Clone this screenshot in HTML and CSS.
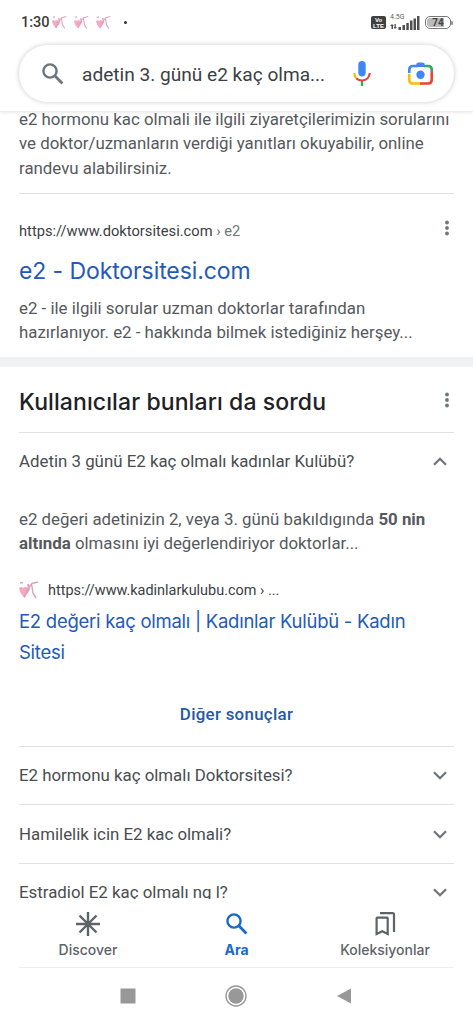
FILE: index.html
```html
<!DOCTYPE html>
<html lang="tr">
<head>
<meta charset="utf-8">
<meta name="viewport" content="width=device-width">
<title>adetin 3. günü e2 kaç olmalı</title>
<link rel="stylesheet" href="styles.css">
</head>
<body>
<svg class="defs" width="0" height="0">
  <symbol id="figure" viewBox="0 0 20 18">
    <path d="M0 7 Q2 5 4 7 Q7 4 9 8 Q11 11 7 13 L6 17 Q1 13 0 7Z" fill="#f6a9bf"/>
    <path d="M9 3 L10 8 L5 16" fill="none" stroke="#f09ab4" stroke-width="1.8"/>
    <path d="M1 2 L4 1.500 M7 10 L13 2.500 L19 1 M12.500 3 L14 12 L17 17" fill="none" stroke="#d9a6bf" stroke-width="1.5"/>
  </symbol>
  <symbol id="dots" viewBox="0 0 4 16"><circle cx="2" cy="2.5" r="1.9"/><circle cx="2" cy="8" r="1.9"/><circle cx="2" cy="13.5" r="1.9"/></symbol>
  <symbol id="down" viewBox="0 0 14 9"><path d="M1 1.2 7 7.2 13 1.2" fill="none" stroke="#70757a" stroke-width="2.3"/></symbol>
  <symbol id="search" viewBox="0 0 22 22"><circle cx="8" cy="8" r="6.6" fill="none" stroke="currentColor" stroke-width="2.4"/><path d="M12.8 12.8 20.4 20.4" stroke="currentColor" stroke-width="2.8"/></symbol>
</svg>
<div class="phone">
  <header class="top">
    <div class="status">
      <span class="clock">1:30</span>
      <span class="notes"><svg><use href="#figure"/></svg><svg><use href="#figure"/></svg><svg><use href="#figure"/></svg></span>
      <span class="bullet"></span>
      <span class="volte"><span>Vo</span><span>LTE</span></span>
      <span class="signal">
        <span class="net">4.5G</span>
        <svg width="30" height="14" viewBox="0 0 30 14" fill="#505050"><path d="M2 8 4 10H3v3H1.500v-3H0zM5 13 3.500 11h1V8h1.300v3H7z"/><path d="M8.500 11h2.500v3H8.500zM12.500 9h2.500v5h-2.500zM16.300 7h2.500v7h-2.500zM20 4.500h2.500V14H20zM23.500 2.500H26V14h-2.500zM27 0h2.500v14H27z"/></svg>
      </span>
      <span class="battery"><span class="cell">74</span><span class="cap"></span></span>
    </div>
    <div class="searchbar">
      <svg class="mag"><use href="#search"/></svg>
      <span class="query">adetin 3. günü e2 kaç olma...</span>
      <svg class="mic" viewBox="0 0 18 25"><rect x="5.300" y="0" width="7.400" height="15.500" rx="3.700" fill="#4285f4"/><path d="M1.200 12 Q1.500 16 4 18" fill="none" stroke="#fbbc04" stroke-width="2.200"/><path d="M3.500 17.500 Q5.500 19.500 9 19.500 Q16 19 16.800 12" fill="none" stroke="#ea4335" stroke-width="2.200"/><path d="M9 20v5" stroke="#34a853" stroke-width="2.300"/></svg>
      <svg class="lens" viewBox="0 0 25 23"><path d="M1.300 11V7.500Q1.300 4 5 4h5" fill="none" stroke="#4285f4" stroke-width="2.600"/><path d="M7 5 9 1.200Q9.500.5 10.500.5h4Q15.500.5 16 1.200L18 5z" fill="#4285f4"/><path d="M16 4h4q3.700 0 3.700 3.500V10" fill="none" stroke="#34a853" stroke-width="2.600"/><path d="M23.700 10v8q0 3.500-3.700 3.500h-8" fill="none" stroke="#ea4335" stroke-width="2.600"/><path d="M1.300 12v6q0 3.500 3.700 3.500h7" fill="none" stroke="#fbbc04" stroke-width="2.600"/><circle cx="12.500" cy="12.700" r="4.200" fill="#4285f4"/></svg>
    </div>
  </header>
  <main class="results">
    <p class="snippet first">e2 hormonu kac olmali ile ilgili ziyaretçilerimizin sorularını<br>ve doktor/uzmanların verdiği yanıtları okuyabilir, online<br>randevu alabilirsiniz.</p>
    <section class="result">
      <div class="source"><span class="url">https://www.doktorsitesi.com <i>› e2</i></span><svg class="more"><use href="#dots"/></svg></div>
      <h3 class="title">e2 - Doktorsitesi.com</h3>
      <p class="snippet">e2 - ile ilgili sorular uzman doktorlar tarafından<br>hazırlanıyor. e2 - hakkında bilmek istediğiniz herşey...</p>
    </section>
    <section class="asked">
      <div class="heading"><h2>Kullanıcılar bunları da sordu</h2><svg class="more"><use href="#dots"/></svg></div>
      <div class="question"><span>Adetin 3 günü E2 kaç olmalı kadınlar Kulübü?</span><svg class="chev up"><use href="#down"/></svg></div>
      <div class="answer">
        <p class="snippet">e2 değeri adetinizin 2, veya 3. günü bakıldıgında <b>50 nin</b><br><b>altında</b> olmasını iyi değerlendiriyor doktorlar...</p>
        <div class="site"><svg class="favicon"><use href="#figure"/></svg><span class="url">https://www.kadinlarkulubu.com › ...</span></div>
        <div class="link">E2 değeri kaç olmalı | Kadınlar Kulübü - Kadın<br>Sitesi</div>
        <div class="others">Diğer sonuçlar</div>
      </div>
      <div class="question"><span>E2 hormonu kaç olmalı Doktorsitesi?</span><svg class="chev"><use href="#down"/></svg></div>
      <div class="question"><span>Hamilelik icin E2 kac olmali?</span><svg class="chev"><use href="#down"/></svg></div>
      <div class="question"><span>Estradiol E2 kaç olmalı ng l?</span><svg class="chev"><use href="#down"/></svg></div>
    </section>
  </main>
  <nav class="tabs">
    <div class="tab"><svg width="26" height="26" viewBox="0 0 26 26" fill="none" stroke="#5f6368" stroke-width="2.400"><path d="M13 1v24M1 13h24M4.500 4.500 21.500 21.500M21.500 4.500 4.500 21.500"/></svg><span>Discover</span></div>
    <div class="tab active"><svg width="26" height="26" viewBox="-2 -2 26 26"><use href="#search" width="22" height="22"/></svg><span>Ara</span></div>
    <div class="tab"><svg width="26" height="26" viewBox="0 0 26 26" fill="none" stroke="#5f6368" stroke-width="2.200"><path d="M4.600 7.300Q4.600 6.600 5.300 6.600H15Q15.700 6.600 15.700 7.300V23L10.200 20.300 4.600 23zM8 2.100H20.500Q22 2.100 22 3.600V21"/></svg><span>Koleksiyonlar</span></div>
  </nav>
  <div class="system">
    <svg width="16" height="16"><rect x=".5" y=".5" width="15" height="15" fill="#989898"/></svg>
    <svg width="22" height="22"><circle cx="11" cy="11" r="10" fill="none" stroke="#989898" stroke-width="1.400"/><circle cx="11" cy="11" r="7.700" fill="#989898"/></svg>
    <svg width="16" height="16"><path d="M1 8 15 .5v15z" fill="#989898"/></svg>
  </div>
</div>
</body>
</html>
```
FILE: styles.css
```css
* { box-sizing: border-box; }
body { margin: 0; background: #fff; font-family: Roboto, sans-serif; color: #4d5156; }
p, h2, h3 { margin: 0; font-weight: 400; }
svg { flex: none; display: block; }
.defs { display: none; }
.phone { width: 473px; height: 1024px; display: flex; flex-direction: column; overflow: hidden; white-space: nowrap; }

.top { height: 112px; flex: none; padding: 0 19px; border-bottom: 1px solid #eee; box-shadow: 0 1px 3px rgba(0,0,0,.08); z-index: 1; }
.status { height: 45px; display: flex; align-items: center; padding-left: 2px; }
.clock { font-size: 14.500px; line-height: 20px; color: #3c3c3c; font-weight: 500; width: 30px; }
.notes { display: flex; gap: 7px; margin-left: 1px; }
.notes svg { width: 15px; height: 15px; }
.bullet { width: 3px; height: 3px; border-radius: 50%; background: #333; margin-left: 13px; }
.volte { width: 15px; height: 13px; margin-left: auto; margin-right: 4px; border-radius: 2px; background: #404040; color: #fff; font: bold 6px/6px "Liberation Sans", sans-serif; display: flex; flex-direction: column; align-items: center; justify-content: center; }
.signal { width: 30px; height: 24px; display: grid; align-items: start; padding-top: 5px; }
.signal > * { grid-area: 1 / 1; }
.net { font-size: 7px; line-height: 8px; margin-top: -3px; color: #666; }
.battery { display: flex; align-items: center; margin: 0 1px 0 5px; }
.cell { width: 26px; height: 13px; border: 1px solid #777; border-radius: 5px; background: linear-gradient(90deg, #bbb 74%, #fff 74%); background-clip: content-box; padding: 1px; font-size: 10px; line-height: 10px; font-weight: 700; text-align: center; color: #444; }
.cap { width: 2px; height: 4px; background: #999; border-radius: 1px; }
.searchbar { height: 57px; border-radius: 29px; display: flex; align-items: center; padding: 0 21px 0 23px; box-shadow: 0 0 5px rgba(0,0,0,.22); }
.mag { width: 22px; height: 22px; color: #70757a; }
.query { font-size: 19.100px; color: #3c4043; margin-left: 18px; width: 271px; padding-top: 1px; }
.mic { width: 18px; height: 25px; }
.lens { width: 25px; height: 23px; margin-left: auto; }

.results { height: 787px; flex: none; overflow: hidden; }
.snippet { font-size: 16.850px; line-height: 24.300px; color: #56595d; }
.first { margin: -5px 19px 0; height: 87px; border-bottom: 1px solid #dfe1e5; }
.result { padding: 25px 19px 0; height: 163px; }
.source { display: flex; justify-content: space-between; height: 24px; align-items: center; }
.url { font-size: 14.700px; color: #3c4043; }
.url i { font-style: normal; color: #70757a; }
.more { width: 4px; height: 16px; fill: #70757a; margin-right: 5px; }
.source .more { margin-top: -7px; }
.title { font: 400 23px/34px Inter, sans-serif; letter-spacing: -.1px; color: #2459b8; margin-top: 11px; }
.result .snippet { margin-top: 8px; }
.asked { border-top: 10px solid #eff1f3; padding: 0 19px; }
.heading { height: 65px; display: flex; align-items: center; justify-content: space-between; padding-top: 5px; }
.heading h2 { font: 500 23px/30px Inter, sans-serif; letter-spacing: .1px; color: #202124; }
.heading .more { margin-top: -5px; }
.question { height: 58.700px; border-top: 1px solid #dfe1e5; display: flex; align-items: center; justify-content: space-between; font-size: 16.850px; color: #4a4d51; }
.question span { padding-bottom: 1px; }
.chev { width: 14px; height: 9px; margin-right: 7px; }
.up { transform: scaleY(-1); }
.answer { height: 255px; padding-top: 16px; }
.site { display: flex; align-items: center; height: 24px; margin-top: 23px; }
.site .url { font-size: 14.450px; }
.favicon { width: 20px; height: 18px; margin-right: 9px; }
.link { font: 400 18.500px/31px Inter, sans-serif; letter-spacing: -.26px; color: #2459b8; margin-top: 4px; }
.others { text-align: center; font-size: 16.850px; line-height: 20px; font-weight: 500; letter-spacing: .3px; color: #2459a8; margin: 36px 0 0; }

.tabs { height: 69px; flex: none; background: #fff; display: flex; justify-content: space-between; margin: 0 19px; border-bottom: 1px solid #eee; padding: 12px 0 0; }
.tab { width: 138px; display: flex; flex-direction: column; align-items: center; font: 500 14px/20px Inter, sans-serif; color: #5f6368; gap: 3px; }
.active { color: #1a6acb; font-weight: 700; }
.system { flex: 1; display: flex; justify-content: space-between; align-items: center; padding: 0 121px 0 120px; }
```
